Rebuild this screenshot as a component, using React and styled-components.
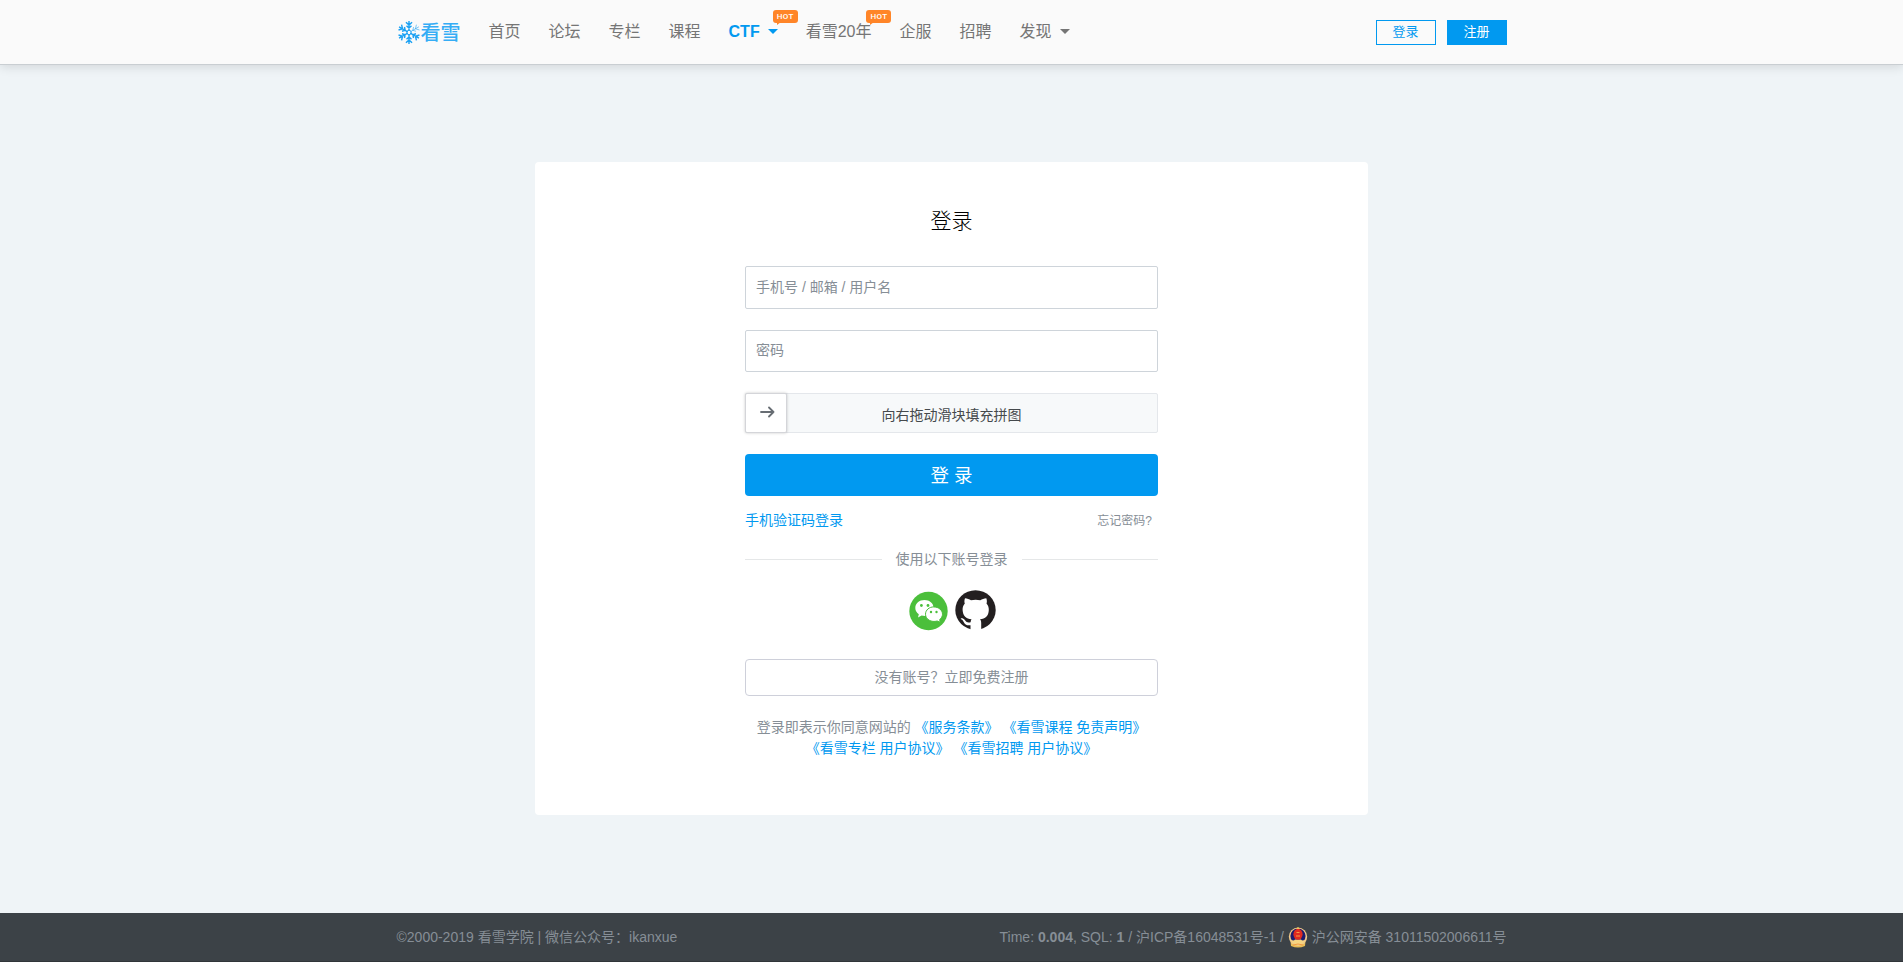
import React from "react";
import styled, { createGlobalStyle } from "styled-components";

const Global = createGlobalStyle`
  * { box-sizing: border-box; }
  body {
    margin: 0;
    background: #eff4f7;
    font-family: "Liberation Sans", "Noto Sans CJK SC", sans-serif;
    font-size: 14px;
    line-height: 21px;
    color: #868e96;
    text-spacing-trim: space-all;
  }
  a { color: #0199f0; text-decoration: none; }
`;

const Page = styled.div`
  height: 962px;
  display: flex;
  flex-direction: column;
  overflow: hidden;
`;
const Header = styled.header`
  height: 65px;
  flex: none;
  background: #fafafa;
  border-bottom: 1px solid #c9ced2;
  box-shadow: 0 2px 10px rgba(0, 0, 0, 0.12);
`;
const Container = styled.div`
  width: 1110px;
  height: 100%;
  margin: 0 auto;
  display: flex;
  align-items: center;
  justify-content: space-between;
`;
const Brand = styled.a`
  display: flex;
  align-items: center;
  width: 64px;
  margin-right: 28px;
  gap: 1px;
  padding: 1px 0 0 1px;
`;
const BrandName = styled.span`
  font-size: 20px;
  line-height: 24px;
  font-weight: 500;
  color: #35adf5;
  white-space: nowrap;
`;
const Nav = styled.nav`
  display: flex;
  align-items: center;
  flex: 1;
  gap: 28px;
`;
const NavItem = styled.a`
  position: relative;
  display: flex;
  align-items: center;
  font-size: 16px;
  line-height: 24px;
  white-space: nowrap;
  font-weight: ${(p) => (p.$active ? 700 : 400)};
  && { color: ${(p) => (p.$active ? "#0199f0" : "#757575")}; }
`;
const Caret = styled.span`
  margin: -2px 0 0 8px;
  border: 5px solid transparent;
  border-top-color: currentColor;
  border-bottom: 0;
`;
const Hot = styled.span`
  position: absolute;
  top: -10px;
  right: -20px;
  width: 25px;
  height: 13px;
  border-radius: 3px;
  background: #ff8528;
  color: #fff;
  font: 500 8px/13px Roboto, sans-serif;
  letter-spacing: 0.4px;
  text-align: center;
  &::after {
    content: "";
    position: absolute;
    left: 4px;
    top: 12px;
    border-top: 3px solid #ff8528;
    border-right: 4px solid transparent;
  }
`;
const Actions = styled.div`
  display: flex;
  gap: 11px;
`;
const SmallButton = styled.a`
  width: 60px;
  height: 25px;
  border: 1px solid #0199f0;
  font-size: 13px;
  line-height: 22px;
  text-align: center;
  background: ${(p) => (p.$solid ? "#0199f0" : "transparent")};
  && { color: ${(p) => (p.$solid ? "#fff" : "#0199f0")}; }
`;
const Main = styled.main`
  flex: 1;
  padding-top: 97px;
`;
const Card = styled.section`
  width: 833px;
  height: 653px;
  margin: 0 auto;
  padding: 44px 210px 0;
  border-radius: 4px;
  background: #fff;
`;
const Title = styled.h1`
  margin: 0 0 30px;
  font-size: 21px;
  line-height: 30px;
  font-weight: 300;
  text-align: center;
  color: #000;
`;
const Field = styled.input`
  display: block;
  width: 100%;
  height: ${(p) => p.$height}px;
  margin: 0 0 21px;
  padding: 0 10px 2px;
  border: 1px solid #ced4da;
  border-radius: 2px;
  font: inherit;
  &::placeholder { color: #868e96; opacity: 1; }
`;
const Captcha = styled.div`
  display: flex;
  height: 40px;
  margin-bottom: 21px;
  border: 1px solid #e4e7eb;
  border-radius: 2px;
  background: #f7f9fa;
`;
const Knob = styled.span`
  display: flex;
  align-items: center;
  justify-content: center;
  width: 42px;
  height: 40px;
  flex: none;
  margin: -1px 0 0 -1px;
  padding: 0 0 2px 2px;
  background: #fff;
  border-radius: 2px;
  border: 1px solid #d4d5d9;
  box-shadow: 0 0 3px rgba(0, 0, 0, 0.22);
`;
const CaptchaText = styled.span`
  flex: 1;
  margin-left: -41px;
  padding-top: 11px;
  text-align: center;
  color: #45494c;
`;
const Submit = styled.button`
  display: block;
  width: 100%;
  height: 42px;
  padding: 1px 0 0;
  border: 0;
  border-radius: 4px;
  background: #0199f0;
  color: #fff;
  font: inherit;
  font-size: 18.5px;
`;
const Row = styled.div`
  display: flex;
  justify-content: space-between;
  align-items: center;
  height: 21px;
  margin-top: 14px;
`;
const Forgot = styled.a`
  && { color: #868e96; }
  font-size: 12px;
  margin-right: 6px;
  padding-top: 2px;
`;
const Divider = styled.div`
  display: flex;
  align-items: center;
  gap: 14px;
  height: 21px;
  margin-top: 18px;
  &::before, &::after {
    content: "";
    flex: 1;
    height: 1px;
    background: #e5e7e8;
  }
`;
const Social = styled.div`
  display: flex;
  justify-content: center;
  gap: 7px;
  height: 41px;
  margin: 20px 0 28px;
  padding-left: 1px;
`;
const Register = styled.a`
  display: block;
  height: 37px;
  border: 1px solid #ced0da;
  border-radius: 4px;
  line-height: 34px;
  text-align: center;
  && { color: #868e96; }
`;
const Terms = styled.p`
  margin: 21px 0 0;
  text-align: center;
`;
const Footer = styled.footer`
  height: 49px;
  flex: none;
  background: #3c4247;
  border-bottom: 1px solid #303539;
  color: #868e96;
`;
const FooterText = styled.span`
  display: flex;
  align-items: center;
  white-space: pre;
`;

const Snowflake = () => (
  <svg width="23" height="25" viewBox="-11.5 -12.5 23 25" fill="none" stroke="#1ba1f3">
    {[0, 60, 120, 180, 240, 300].map((a) => (
      <path
        key={a}
        transform={`rotate(${a})`}
        opacity={a === 60 ? 0.6 : 1}
        strokeWidth={a === 60 ? 0.9 : 1.5}
        d="M0 -1.5V-12M-3.2 -10.8L0 -7.8L3.2 -10.8M-2.6 -7L0 -4.6L2.6 -7"
      />
    ))}
    <path strokeWidth="1" d="M0 -2.600L2.250 -1.300V1.300L0 2.600L-2.250 1.300V-1.300Z" />
  </svg>
);

const ArrowRight = () => (
  <svg width="16" height="12" viewBox="0 0 16 12" fill="none" stroke="#676d73" strokeWidth="1.8" strokeLinecap="round" strokeLinejoin="round">
    <path d="M2 6H14.5M10 1.5L14.5 6L10 10.5" />
  </svg>
);

const WeChat = () => (
  <svg width="39" height="41" viewBox="0 0 39 41">
    <circle cx="19.5" cy="21" r="19.2" fill="#4bbf3b" />
    <path fill="#fff" d="M15.500 10C10.200 10 6.300 13.500 6.300 18C6.300 20.700 7.700 22.800 9.800 24.300L9 27.600L12.600 25.600C14.300 26 16 26.100 17.700 25.900L24.500 17.500C24.500 13.200 20.500 10 15.500 10Z" />
    <path fill="#fff" stroke="#4bbf3b" strokeWidth="1" d="M24.800 16.900C29.500 16.900 33.500 20.100 33.500 24.200C33.500 26.400 32.300 28.200 30.700 29.500L31.200 32.300L28.200 31C22.500 32.700 16.500 29.500 16.500 24.200C16.500 20 20.200 16.900 24.800 16.900Z" />
    <g fill="#4bbf3b"><circle cx="12.400" cy="15.500" r="1.400" /><circle cx="19" cy="15.500" r="1.400" /><circle cx="22" cy="22" r="1.200" /><circle cx="27.500" cy="22" r="1.200" /></g>
  </svg>
);

const GitHub = () => (
  <svg width="41" height="40" viewBox="0 0 41 40">
    <ellipse cx="20.500" cy="20" rx="20.200" ry="19.800" fill="#231f20" />
    <path
      fill="#fff"
      d="M10 8.200C12.200 8.200 14.300 9.200 16 10.300C19 9.600 22.300 9.600 25.300 10.300C27 9.200 29.100 8.200 31.300 8.200C32.100 10.200 32 12.200 31.500 13.600C33.200 15.500 33.900 17.600 33.800 20C33.600 26 30.300 28.600 25 29.300C26 30.400 26.200 31.500 26.200 33V40H15.500V35.200C11.800 35.700 9.900 34.400 8.700 31.900C8 30.400 7 29.600 5.800 29C5.300 28.200 8.200 27.700 10 30.300C11.500 32.400 13 32.900 15.600 32.200C15.700 31 16 30.100 16.500 29.300C11.200 28.600 7.900 26 7.600 20C7.500 17.600 8.200 15.500 9.800 13.600C9.300 12.200 9.200 10.200 10 8.200Z"
    />
  </svg>
);

const Emblem = () => (
  <svg width="20" height="21" viewBox="0 0 20 21">
    <path d="M2.500 14L3 19Q10 22 17 19L17.500 14Z" fill="#e9bd55" />
    <circle cx="10" cy="9.800" r="9.200" fill="#f0c98a" />
    <circle cx="10" cy="9" r="7.600" fill="#1d1c70" />
    <path d="M3 13Q6 14 7 12.500H13Q14 14 17 13Q15 18 10 18Q5 18 3 13Z" fill="#f6d582" />
    <ellipse cx="10" cy="7.300" rx="4.600" ry="5.500" fill="#e12a20" />
    <path d="M10 0L12 2H8Z" fill="#f0c55c" />
    <path d="M8 9H12M8.500 5.500H11.500M5 18Q10 16 15 18" stroke="#f39a42" fill="none" />
  </svg>
);

const navItems = [
  { label: "首页" },
  { label: "论坛" },
  { label: "专栏" },
  { label: "课程" },
  { label: "CTF", active: true, caret: true, hot: true },
  { label: "看雪20年", hot: true },
  { label: "企服" },
  { label: "招聘" },
  { label: "发现", caret: true },
];

export default function App() {
  return (
    <Page>
      <Global />
      <Header>
        <Container>
          <Brand href="#"><Snowflake /><BrandName>看雪</BrandName></Brand>
          <Nav>
            {navItems.map((n) => (
              <NavItem key={n.label} href="#" $active={n.active}>
                {n.label}
                {n.caret && <Caret />}
                {n.hot && <Hot>HOT</Hot>}
              </NavItem>
            ))}
          </Nav>
          <Actions>
            <SmallButton href="#">登录</SmallButton>
            <SmallButton href="#" $solid>注册</SmallButton>
          </Actions>
        </Container>
      </Header>
      <Main>
        <Card>
          <Title>登录</Title>
          <Field $height={43} placeholder="手机号 / 邮箱 / 用户名" />
          <Field $height={42} type="password" placeholder="密码" />
          <Captcha>
            <Knob><ArrowRight /></Knob>
            <CaptchaText>向右拖动滑块填充拼图</CaptchaText>
          </Captcha>
          <Submit>登 录</Submit>
          <Row>
            <a href="#">手机验证码登录</a>
            <Forgot href="#">忘记密码?</Forgot>
          </Row>
          <Divider>使用以下账号登录</Divider>
          <Social><WeChat /><GitHub /></Social>
          <Register href="#">没有账号？立即免费注册</Register>
          <Terms>
            登录即表示你同意网站的 <a href="#">《服务条款》</a> <a href="#">《看雪课程 免责声明》</a>
            <br />
            <a href="#">《看雪专栏 用户协议》</a> <a href="#">《看雪招聘 用户协议》</a>
          </Terms>
        </Card>
      </Main>
      <Footer>
        <Container>
          <FooterText>©2000-2019 看雪学院 | 微信公众号：ikanxue</FooterText>
          <FooterText>Time: <b>0.004</b>, SQL: <b>1</b> / 沪ICP备16048531号-1 / <Emblem /> 沪公网安备 31011502006611号</FooterText>
        </Container>
      </Footer>
    </Page>
  );
}
